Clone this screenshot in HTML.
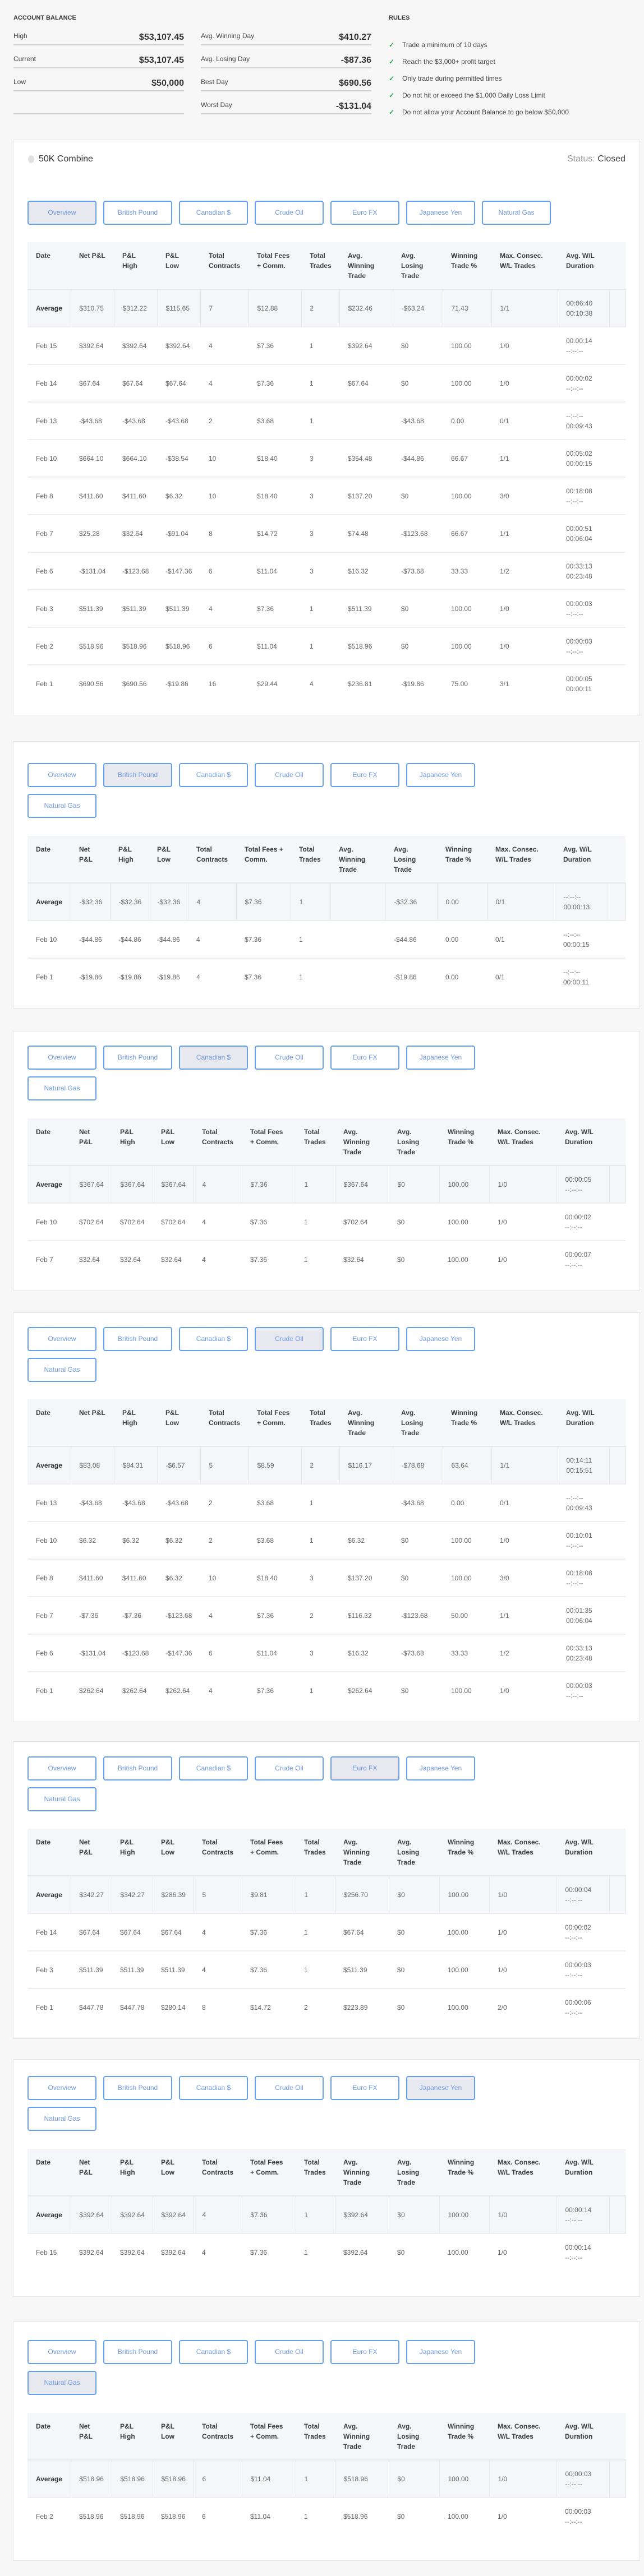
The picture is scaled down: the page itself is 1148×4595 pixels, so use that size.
<!DOCTYPE html>
<html><head><meta charset="utf-8">
<style>
*{box-sizing:border-box;margin:0;padding:0}
html,body{width:1148px;height:4595px;background:#f7f7f7;font-family:"Liberation Sans",sans-serif;color:#555;position:relative;overflow:hidden}
.h{position:absolute;font-size:11px;font-weight:bold;color:#333;letter-spacing:0}
.stat{position:absolute;width:304px;height:41px;border-bottom:2px solid #cfd0d3}
.stat .l{position:absolute;left:0;top:17px;font-size:12px;color:#444}
.stat .v{position:absolute;right:0;top:18px;font-size:16px;font-weight:bold;color:#333}
.rule{position:absolute;left:693px;font-size:12px;color:#444}
.rule b{color:#2aa34a;display:inline-block;width:24px;font-size:12px}
.card{position:absolute;left:23px;width:1118px;background:#fff;border:1px solid #e3e4e6}
.tabs{position:absolute;left:25px;width:1000px}
.tab{position:absolute;width:123px;height:43px;border:2px solid #64a0ec;border-radius:4px;background:#fff;color:#6f9ae6;font-size:12px;text-align:center;line-height:39px}
.tab.on{background:#e7e9ee}
table{position:absolute;left:25px;width:1066px;border-collapse:collapse;table-layout:fixed;font-size:12px}
th{background:#f5f6f9;height:84px;text-align:left;vertical-align:top;padding:15px 0 0 15px;line-height:18px;font-weight:bold;color:#3a3d42;border-bottom:2px solid #e6e8eb}
td{height:67px;padding:0 0 0 15px;line-height:18px;vertical-align:middle;color:#666;border-bottom:2px solid #eceef1;white-space:nowrap}
tr.avg td{background:#f5f6f9;border-right:1px solid #e6e8eb}
tr.avg td:first-child{font-weight:bold;color:#333}
tbody tr:last-child td{border-bottom:none}
.d{padding-top:0}
</style></head><body>

<div class="h" style="left:24px;top:26px">ACCOUNT BALANCE</div>
<div class="h" style="left:693px;top:26px">RULES</div>

<div class="stat" style="left:24px;top:40px"><span class="l">High</span><span class="v">$53,107.45</span></div>
<div class="stat" style="left:24px;top:81px"><span class="l">Current</span><span class="v">$53,107.45</span></div>
<div class="stat" style="left:24px;top:122px"><span class="l">Low</span><span class="v">$50,000</span></div>
<div class="stat" style="left:24px;top:163px"></div>
<div class="stat" style="left:358px;top:40px"><span class="l">Avg. Winning Day</span><span class="v">$410.27</span></div>
<div class="stat" style="left:358px;top:81px"><span class="l">Avg. Losing Day</span><span class="v">-$87.36</span></div>
<div class="stat" style="left:358px;top:122px"><span class="l">Best Day</span><span class="v">$690.56</span></div>
<div class="stat" style="left:358px;top:163px"><span class="l">Worst Day</span><span class="v">-$131.04</span></div>

<div class="rule" style="top:73px"><b>✓</b>Trade a minimum of 10 days</div>
<div class="rule" style="top:103px"><b>✓</b>Reach the $3,000+ profit target</div>
<div class="rule" style="top:133px"><b>✓</b>Only trade during permitted times</div>
<div class="rule" style="top:163px"><b>✓</b>Do not hit or exceed the $1,000 Daily Loss Limit</div>
<div class="rule" style="top:193px"><b>✓</b>Do not allow your Account Balance to go below $50,000</div>

<!-- CARD 1 -->
<div class="card" style="top:249px;height:1027px">
  <div style="position:absolute;left:26px;top:27px;width:11px;height:14px;border-radius:50%;background:#dfe1e4"></div>
  <div style="position:absolute;left:45px;top:25px;font-size:16px;color:#333">50K Combine</div>
  <div style="position:absolute;right:25px;top:25px;font-size:16px;color:#999">Status: <span style="color:#444">Closed</span></div>
  <div class="tabs" style="top:108px">
    <div class="tab on" style="left:0">Overview</div><div class="tab" style="left:135px">British Pound</div><div class="tab" style="left:270px">Canadian $</div><div class="tab" style="left:405px">Crude Oil</div><div class="tab" style="left:540px">Euro FX</div><div class="tab" style="left:675px">Japanese Yen</div><div class="tab" style="left:810px">Natural Gas</div>
  </div>
  <table style="top:182px">
    <colgroup><col style="width:77px"><col style="width:77px"><col style="width:77px"><col style="width:77px"><col style="width:86px"><col style="width:94px"><col style="width:68px"><col style="width:95px"><col style="width:89px"><col style="width:87px"><col style="width:118px"><col style="width:92px"><col style="width:29px"></colgroup>
    <thead><tr><th>Date</th><th>Net P&amp;L</th><th>P&amp;L<br>High</th><th>P&amp;L<br>Low</th><th>Total<br>Contracts</th><th>Total Fees<br>+ Comm.</th><th>Total<br>Trades</th><th>Avg.<br>Winning<br>Trade</th><th>Avg.<br>Losing<br>Trade</th><th>Winning<br>Trade %</th><th>Max. Consec.<br>W/L Trades</th><th>Avg. W/L<br>Duration</th><th></th></tr></thead>
    <tbody>
    <tr class="avg"><td>Average</td><td>$310.75</td><td>$312.22</td><td>$115.65</td><td>7</td><td>$12.88</td><td>2</td><td>$232.46</td><td>-$63.24</td><td>71.43</td><td>1/1</td><td>00:06:40<br>00:10:38</td><td></td></tr>
    <tr><td>Feb 15</td><td>$392.64</td><td>$392.64</td><td>$392.64</td><td>4</td><td>$7.36</td><td>1</td><td>$392.64</td><td>$0</td><td>100.00</td><td>1/0</td><td>00:00:14<br>--:--:--</td><td></td></tr>
    <tr><td>Feb 14</td><td>$67.64</td><td>$67.64</td><td>$67.64</td><td>4</td><td>$7.36</td><td>1</td><td>$67.64</td><td>$0</td><td>100.00</td><td>1/0</td><td>00:00:02<br>--:--:--</td><td></td></tr>
    <tr><td>Feb 13</td><td>-$43.68</td><td>-$43.68</td><td>-$43.68</td><td>2</td><td>$3.68</td><td>1</td><td></td><td>-$43.68</td><td>0.00</td><td>0/1</td><td>--:--:--<br>00:09:43</td><td></td></tr>
    <tr><td>Feb 10</td><td>$664.10</td><td>$664.10</td><td>-$38.54</td><td>10</td><td>$18.40</td><td>3</td><td>$354.48</td><td>-$44.86</td><td>66.67</td><td>1/1</td><td>00:05:02<br>00:00:15</td><td></td></tr>
    <tr><td>Feb 8</td><td>$411.60</td><td>$411.60</td><td>$6.32</td><td>10</td><td>$18.40</td><td>3</td><td>$137.20</td><td>$0</td><td>100.00</td><td>3/0</td><td>00:18:08<br>--:--:--</td><td></td></tr>
    <tr><td>Feb 7</td><td>$25.28</td><td>$32.64</td><td>-$91.04</td><td>8</td><td>$14.72</td><td>3</td><td>$74.48</td><td>-$123.68</td><td>66.67</td><td>1/1</td><td>00:00:51<br>00:06:04</td><td></td></tr>
    <tr><td>Feb 6</td><td>-$131.04</td><td>-$123.68</td><td>-$147.36</td><td>6</td><td>$11.04</td><td>3</td><td>$16.32</td><td>-$73.68</td><td>33.33</td><td>1/2</td><td>00:33:13<br>00:23:48</td><td></td></tr>
    <tr><td>Feb 3</td><td>$511.39</td><td>$511.39</td><td>$511.39</td><td>4</td><td>$7.36</td><td>1</td><td>$511.39</td><td>$0</td><td>100.00</td><td>1/0</td><td>00:00:03<br>--:--:--</td><td></td></tr>
    <tr><td>Feb 2</td><td>$518.96</td><td>$518.96</td><td>$518.96</td><td>6</td><td>$11.04</td><td>1</td><td>$518.96</td><td>$0</td><td>100.00</td><td>1/0</td><td>00:00:03<br>--:--:--</td><td></td></tr>
    <tr><td>Feb 1</td><td>$690.56</td><td>$690.56</td><td>-$19.86</td><td>16</td><td>$29.44</td><td>4</td><td>$236.81</td><td>-$19.86</td><td>75.00</td><td>3/1</td><td>00:00:05<br>00:00:11</td><td></td></tr>
    </tbody>
  </table>
</div>

<!-- CARD 2 -->
<div class="card" style="top:1322px;height:477px">
  <div class="tabs" style="top:38px">
    <div class="tab" style="left:0">Overview</div><div class="tab on" style="left:135px">British Pound</div><div class="tab" style="left:270px">Canadian $</div><div class="tab" style="left:405px">Crude Oil</div><div class="tab" style="left:540px">Euro FX</div><div class="tab" style="left:675px">Japanese Yen</div><div class="tab" style="left:0;top:55px">Natural Gas</div>
  </div>
  <table style="top:168px">
    <colgroup><col style="width:77px"><col style="width:70px"><col style="width:69px"><col style="width:70px"><col style="width:86px"><col style="width:97px"><col style="width:71px"><col style="width:98px"><col style="width:92px"><col style="width:89px"><col style="width:121px"><col style="width:96px"><col style="width:30px"></colgroup>
    <thead><tr><th>Date</th><th>Net<br>P&amp;L</th><th>P&amp;L<br>High</th><th>P&amp;L<br>Low</th><th>Total<br>Contracts</th><th>Total Fees +<br>Comm.</th><th>Total<br>Trades</th><th>Avg.<br>Winning<br>Trade</th><th>Avg.<br>Losing<br>Trade</th><th>Winning<br>Trade %</th><th>Max. Consec.<br>W/L Trades</th><th>Avg. W/L<br>Duration</th><th></th></tr></thead>
    <tbody>
    <tr class="avg"><td>Average</td><td>-$32.36</td><td>-$32.36</td><td>-$32.36</td><td>4</td><td>$7.36</td><td>1</td><td></td><td>-$32.36</td><td>0.00</td><td>0/1</td><td>--:--:--<br>00:00:13</td><td></td></tr>
    <tr><td>Feb 10</td><td>-$44.86</td><td>-$44.86</td><td>-$44.86</td><td>4</td><td>$7.36</td><td>1</td><td></td><td>-$44.86</td><td>0.00</td><td>0/1</td><td>--:--:--<br>00:00:15</td><td></td></tr>
    <tr><td>Feb 1</td><td>-$19.86</td><td>-$19.86</td><td>-$19.86</td><td>4</td><td>$7.36</td><td>1</td><td></td><td>-$19.86</td><td>0.00</td><td>0/1</td><td>--:--:--<br>00:00:11</td><td></td></tr>
    </tbody>
  </table>
</div>

<!-- CARD 3 -->
<div class="card" style="top:1839px;height:464px">
  <div class="tabs" style="top:25px">
    <div class="tab" style="left:0">Overview</div><div class="tab" style="left:135px">British Pound</div><div class="tab on" style="left:270px">Canadian $</div><div class="tab" style="left:405px">Crude Oil</div><div class="tab" style="left:540px">Euro FX</div><div class="tab" style="left:675px">Japanese Yen</div><div class="tab" style="left:0;top:55px">Natural Gas</div>
  </div>
  <table style="top:155px">
    <colgroup><col style="width:77px"><col style="width:73px"><col style="width:73px"><col style="width:73px"><col style="width:86px"><col style="width:96px"><col style="width:70px"><col style="width:96px"><col style="width:90px"><col style="width:89px"><col style="width:120px"><col style="width:94px"><col style="width:29px"></colgroup>
    <thead><tr><th>Date</th><th>Net<br>P&amp;L</th><th>P&amp;L<br>High</th><th>P&amp;L<br>Low</th><th>Total<br>Contracts</th><th>Total Fees<br>+ Comm.</th><th>Total<br>Trades</th><th>Avg.<br>Winning<br>Trade</th><th>Avg.<br>Losing<br>Trade</th><th>Winning<br>Trade %</th><th>Max. Consec.<br>W/L Trades</th><th>Avg. W/L<br>Duration</th><th></th></tr></thead>
    <tbody>
    <tr class="avg"><td>Average</td><td>$367.64</td><td>$367.64</td><td>$367.64</td><td>4</td><td>$7.36</td><td>1</td><td>$367.64</td><td>$0</td><td>100.00</td><td>1/0</td><td>00:00:05<br>--:--:--</td><td></td></tr>
    <tr><td>Feb 10</td><td>$702.64</td><td>$702.64</td><td>$702.64</td><td>4</td><td>$7.36</td><td>1</td><td>$702.64</td><td>$0</td><td>100.00</td><td>1/0</td><td>00:00:02<br>--:--:--</td><td></td></tr>
    <tr><td>Feb 7</td><td>$32.64</td><td>$32.64</td><td>$32.64</td><td>4</td><td>$7.36</td><td>1</td><td>$32.64</td><td>$0</td><td>100.00</td><td>1/0</td><td>00:00:07<br>--:--:--</td><td></td></tr>
    </tbody>
  </table>
</div>

<!-- CARD 4 -->
<div class="card" style="top:2341px;height:731px">
  <div class="tabs" style="top:25px">
    <div class="tab" style="left:0">Overview</div><div class="tab" style="left:135px">British Pound</div><div class="tab" style="left:270px">Canadian $</div><div class="tab on" style="left:405px">Crude Oil</div><div class="tab" style="left:540px">Euro FX</div><div class="tab" style="left:675px">Japanese Yen</div><div class="tab" style="left:0;top:55px">Natural Gas</div>
  </div>
  <table style="top:154px">
    <colgroup><col style="width:77px"><col style="width:77px"><col style="width:77px"><col style="width:77px"><col style="width:86px"><col style="width:94px"><col style="width:68px"><col style="width:95px"><col style="width:89px"><col style="width:87px"><col style="width:118px"><col style="width:92px"><col style="width:29px"></colgroup>
    <thead><tr><th>Date</th><th>Net P&amp;L</th><th>P&amp;L<br>High</th><th>P&amp;L<br>Low</th><th>Total<br>Contracts</th><th>Total Fees<br>+ Comm.</th><th>Total<br>Trades</th><th>Avg.<br>Winning<br>Trade</th><th>Avg.<br>Losing<br>Trade</th><th>Winning<br>Trade %</th><th>Max. Consec.<br>W/L Trades</th><th>Avg. W/L<br>Duration</th><th></th></tr></thead>
    <tbody>
    <tr class="avg"><td>Average</td><td>$83.08</td><td>$84.31</td><td>-$6.57</td><td>5</td><td>$8.59</td><td>2</td><td>$116.17</td><td>-$78.68</td><td>63.64</td><td>1/1</td><td>00:14:11<br>00:15:51</td><td></td></tr>
    <tr><td>Feb 13</td><td>-$43.68</td><td>-$43.68</td><td>-$43.68</td><td>2</td><td>$3.68</td><td>1</td><td></td><td>-$43.68</td><td>0.00</td><td>0/1</td><td>--:--:--<br>00:09:43</td><td></td></tr>
    <tr><td>Feb 10</td><td>$6.32</td><td>$6.32</td><td>$6.32</td><td>2</td><td>$3.68</td><td>1</td><td>$6.32</td><td>$0</td><td>100.00</td><td>1/0</td><td>00:10:01<br>--:--:--</td><td></td></tr>
    <tr><td>Feb 8</td><td>$411.60</td><td>$411.60</td><td>$6.32</td><td>10</td><td>$18.40</td><td>3</td><td>$137.20</td><td>$0</td><td>100.00</td><td>3/0</td><td>00:18:08<br>--:--:--</td><td></td></tr>
    <tr><td>Feb 7</td><td>-$7.36</td><td>-$7.36</td><td>-$123.68</td><td>4</td><td>$7.36</td><td>2</td><td>$116.32</td><td>-$123.68</td><td>50.00</td><td>1/1</td><td>00:01:35<br>00:06:04</td><td></td></tr>
    <tr><td>Feb 6</td><td>-$131.04</td><td>-$123.68</td><td>-$147.36</td><td>6</td><td>$11.04</td><td>3</td><td>$16.32</td><td>-$73.68</td><td>33.33</td><td>1/2</td><td>00:33:13<br>00:23:48</td><td></td></tr>
    <tr><td>Feb 1</td><td>$262.64</td><td>$262.64</td><td>$262.64</td><td>4</td><td>$7.36</td><td>1</td><td>$262.64</td><td>$0</td><td>100.00</td><td>1/0</td><td>00:00:03<br>--:--:--</td><td></td></tr>
    </tbody>
  </table>
</div>

<!-- CARD 5 -->
<div class="card" style="top:3106px;height:531px">
  <div class="tabs" style="top:26px">
    <div class="tab" style="left:0">Overview</div><div class="tab" style="left:135px">British Pound</div><div class="tab" style="left:270px">Canadian $</div><div class="tab" style="left:405px">Crude Oil</div><div class="tab on" style="left:540px">Euro FX</div><div class="tab" style="left:675px">Japanese Yen</div><div class="tab" style="left:0;top:55px">Natural Gas</div>
  </div>
  <table style="top:155px">
    <colgroup><col style="width:77px"><col style="width:73px"><col style="width:73px"><col style="width:73px"><col style="width:86px"><col style="width:96px"><col style="width:70px"><col style="width:96px"><col style="width:90px"><col style="width:89px"><col style="width:120px"><col style="width:94px"><col style="width:29px"></colgroup>
    <thead><tr><th>Date</th><th>Net<br>P&amp;L</th><th>P&amp;L<br>High</th><th>P&amp;L<br>Low</th><th>Total<br>Contracts</th><th>Total Fees<br>+ Comm.</th><th>Total<br>Trades</th><th>Avg.<br>Winning<br>Trade</th><th>Avg.<br>Losing<br>Trade</th><th>Winning<br>Trade %</th><th>Max. Consec.<br>W/L Trades</th><th>Avg. W/L<br>Duration</th><th></th></tr></thead>
    <tbody>
    <tr class="avg"><td>Average</td><td>$342.27</td><td>$342.27</td><td>$286.39</td><td>5</td><td>$9.81</td><td>1</td><td>$256.70</td><td>$0</td><td>100.00</td><td>1/0</td><td>00:00:04<br>--:--:--</td><td></td></tr>
    <tr><td>Feb 14</td><td>$67.64</td><td>$67.64</td><td>$67.64</td><td>4</td><td>$7.36</td><td>1</td><td>$67.64</td><td>$0</td><td>100.00</td><td>1/0</td><td>00:00:02<br>--:--:--</td><td></td></tr>
    <tr><td>Feb 3</td><td>$511.39</td><td>$511.39</td><td>$511.39</td><td>4</td><td>$7.36</td><td>1</td><td>$511.39</td><td>$0</td><td>100.00</td><td>1/0</td><td>00:00:03<br>--:--:--</td><td></td></tr>
    <tr><td>Feb 1</td><td>$447.78</td><td>$447.78</td><td>$280.14</td><td>8</td><td>$14.72</td><td>2</td><td>$223.89</td><td>$0</td><td>100.00</td><td>2/0</td><td>00:00:06<br>--:--:--</td><td></td></tr>
    </tbody>
  </table>
</div>

<!-- CARD 6 -->
<div class="card" style="top:3673px;height:424px">
  <div class="tabs" style="top:29px">
    <div class="tab" style="left:0">Overview</div><div class="tab" style="left:135px">British Pound</div><div class="tab" style="left:270px">Canadian $</div><div class="tab" style="left:405px">Crude Oil</div><div class="tab" style="left:540px">Euro FX</div><div class="tab on" style="left:675px">Japanese Yen</div><div class="tab" style="left:0;top:55px">Natural Gas</div>
  </div>
  <table style="top:159px">
    <colgroup><col style="width:77px"><col style="width:73px"><col style="width:73px"><col style="width:73px"><col style="width:86px"><col style="width:96px"><col style="width:70px"><col style="width:96px"><col style="width:90px"><col style="width:89px"><col style="width:120px"><col style="width:94px"><col style="width:29px"></colgroup>
    <thead><tr><th>Date</th><th>Net<br>P&amp;L</th><th>P&amp;L<br>High</th><th>P&amp;L<br>Low</th><th>Total<br>Contracts</th><th>Total Fees<br>+ Comm.</th><th>Total<br>Trades</th><th>Avg.<br>Winning<br>Trade</th><th>Avg.<br>Losing<br>Trade</th><th>Winning<br>Trade %</th><th>Max. Consec.<br>W/L Trades</th><th>Avg. W/L<br>Duration</th><th></th></tr></thead>
    <tbody>
    <tr class="avg"><td>Average</td><td>$392.64</td><td>$392.64</td><td>$392.64</td><td>4</td><td>$7.36</td><td>1</td><td>$392.64</td><td>$0</td><td>100.00</td><td>1/0</td><td>00:00:14<br>--:--:--</td><td></td></tr>
    <tr><td>Feb 15</td><td>$392.64</td><td>$392.64</td><td>$392.64</td><td>4</td><td>$7.36</td><td>1</td><td>$392.64</td><td>$0</td><td>100.00</td><td>1/0</td><td>00:00:14<br>--:--:--</td><td></td></tr>
    </tbody>
  </table>
</div>

<!-- CARD 7 -->
<div class="card" style="top:4141px;height:427px">
  <div class="tabs" style="top:32px">
    <div class="tab" style="left:0">Overview</div><div class="tab" style="left:135px">British Pound</div><div class="tab" style="left:270px">Canadian $</div><div class="tab" style="left:405px">Crude Oil</div><div class="tab" style="left:540px">Euro FX</div><div class="tab" style="left:675px">Japanese Yen</div><div class="tab on" style="left:0;top:55px">Natural Gas</div>
  </div>
  <table style="top:162px">
    <colgroup><col style="width:77px"><col style="width:73px"><col style="width:73px"><col style="width:73px"><col style="width:86px"><col style="width:96px"><col style="width:70px"><col style="width:96px"><col style="width:90px"><col style="width:89px"><col style="width:120px"><col style="width:94px"><col style="width:29px"></colgroup>
    <thead><tr><th>Date</th><th>Net<br>P&amp;L</th><th>P&amp;L<br>High</th><th>P&amp;L<br>Low</th><th>Total<br>Contracts</th><th>Total Fees<br>+ Comm.</th><th>Total<br>Trades</th><th>Avg.<br>Winning<br>Trade</th><th>Avg.<br>Losing<br>Trade</th><th>Winning<br>Trade %</th><th>Max. Consec.<br>W/L Trades</th><th>Avg. W/L<br>Duration</th><th></th></tr></thead>
    <tbody>
    <tr class="avg"><td>Average</td><td>$518.96</td><td>$518.96</td><td>$518.96</td><td>6</td><td>$11.04</td><td>1</td><td>$518.96</td><td>$0</td><td>100.00</td><td>1/0</td><td>00:00:03<br>--:--:--</td><td></td></tr>
    <tr><td>Feb 2</td><td>$518.96</td><td>$518.96</td><td>$518.96</td><td>6</td><td>$11.04</td><td>1</td><td>$518.96</td><td>$0</td><td>100.00</td><td>1/0</td><td>00:00:03<br>--:--:--</td><td></td></tr>
    </tbody>
  </table>
</div>

</body></html>
